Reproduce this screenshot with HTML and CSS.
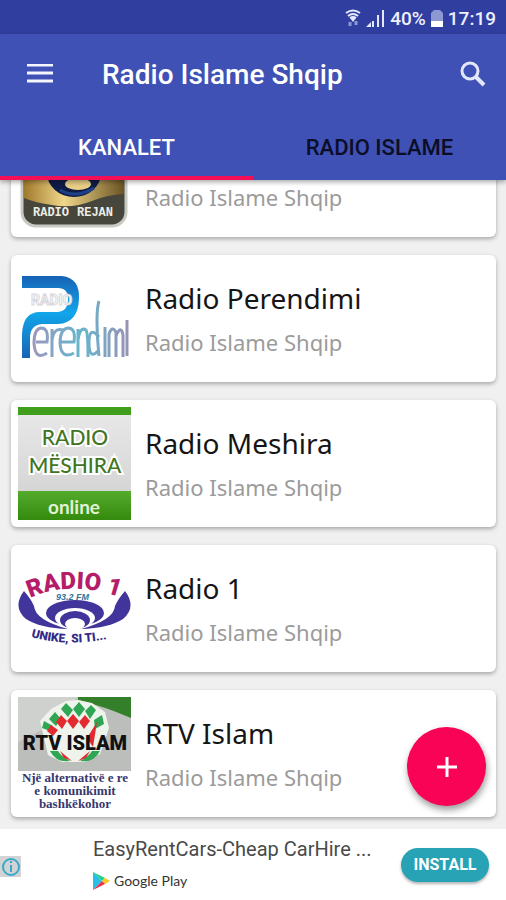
FILE: index.html
```html
<!DOCTYPE html>
<html lang="sq">
<head>
  <meta charset="UTF-8" />
  <meta name="viewport" content="width=device-width, initial-scale=1.0" />
  <title>Radio Islame Shqip</title>
  <link rel="stylesheet" href="styles.css">
</head>
<body>

  <div class="status-bar">
    <svg class="wifi-icon" viewBox="0 0 16 18" width="16" height="18">
      <g fill="none" stroke="#e4e8ff" stroke-width="2">
        <path d="M1 4Q8-1 15 4" />
        <path d="M3 7Q8 3 13 7" />
        <path d="M5 9Q8 7 11 9" />
      </g>
      <path d="M5 9h6l-3 4z" fill="#e4e8ff" />
      <path d="M5 17v-4M11 12v4" stroke="#8b96d4" stroke-width="3" />
    </svg>
    <svg class="signal-icon" viewBox="0 0 19 18" width="19" height="18">
      <path d="M0 18l5-5v5zM6 12h2v6h-2zM11 6h2v12h-2zM16 1h2v17h-2z" fill="#e4e8ff" />
    </svg>
    <span>40%</span>
    <svg class="battery-icon" viewBox="0 0 12 19" width="12" height="19">
      <path d="M3 1h6l3 3v8H0V4z" fill="#8d97d2" />
      <path d="M0 12h12v6H0z" fill="#fff" />
    </svg>
    <span class="clock">17:19</span>
  </div>

  <header>
    <div class="toolbar">
      <button class="icon-btn" aria-label="Menu">
        <svg viewBox="0 0 28 20" width="28" height="20">
          <path d="M1 1h26M1 9h26M1 17h26" stroke="#f3f5ff" stroke-width="3" />
        </svg>
      </button>
      <h1>Radio Islame Shqip</h1>
      <button class="icon-btn" aria-label="Search">
        <svg viewBox="0 0 26 26" width="26" height="26" fill="none" stroke="#e3e7fb" stroke-width="3">
          <circle cx="10" cy="10" r="8" />
          <path d="M15 15l9 9" stroke-width="4" />
        </svg>
      </button>
    </div>
    <nav class="tabs">
      <a class="tab active" href="#kanalet">KANALET</a>
      <a class="tab" href="#radio">RADIO ISLAME</a>
    </nav>
  </header>

  <main class="channel-list" id="kanalet">
    <article class="card" aria-label="Radio Rejan">
      <svg class="thumb" viewBox="0 0 113 113">
        <defs>
          <linearGradient id="gold" x1="0" x2="1">
            <stop offset="0" stop-color="#a07a2c" />
            <stop offset="0.4" stop-color="#f0d78a" />
            <stop offset="1" stop-color="#6b5424" />
          </linearGradient>
        </defs>
        <rect x="4" y="2" width="104" height="107" rx="14" fill="#46463c" stroke="#c9c9c4" stroke-width="3" />
        <path d="M6 50H106V77Q88 78 74 84Q54 92 34 88Q18 86 6 81Z" fill="url(#gold)" />
        <ellipse cx="56" cy="56" rx="27" ry="24" fill="#101c48" />
        <ellipse cx="60" cy="67" rx="13" ry="6" fill="#e7cf86" />
        <path d="M42 73Q58 82 76 71" fill="none" stroke="#1d4187" stroke-width="3" />
        <text x="15" y="99" class="logo-rejan">RADIO</text>
        <text x="59" y="99" class="logo-rejan">REJAN</text>
      </svg>
      <div class="info info-end">
        <p>Radio Islame Shqip</p>
      </div>
    </article>

    <article class="card">
      <svg class="thumb" viewBox="0 0 113 113">
        <defs>
          <linearGradient id="blue" x1="0" y1="0" x2="0" y2="1">
            <stop offset="0" stop-color="#1762b5" />
            <stop offset="0.45" stop-color="#12a6ea" />
            <stop offset="1" stop-color="#1763b4" />
          </linearGradient>
          <linearGradient id="script" gradientUnits="userSpaceOnUse" x1="14" x2="110" y1="0" y2="0">
            <stop offset="0" stop-color="#9d97bd" />
            <stop offset="0.5" stop-color="#66b5cd" />
            <stop offset="1" stop-color="#9694b5" />
          </linearGradient>
        </defs>
        <path d="M4 14H44Q62 16 61 37Q60 61 40 62H24Q12 63 12 76V96H4V72Q5 50 22 50H40Q50 49 50 37Q50 26 40 26H4Z" fill="url(#blue)" />
        <text x="13" y="43" class="logo-faint">RADIO</text>
        <g fill="none" stroke="url(#script)" stroke-width="3">
          <path d="M18 80H29Q31 66 23 66Q16 67 16 81Q17 99 29 91M34 95V67M34 78Q36 65 45 68" />
          <path d="M43 80H56Q58 66 50 66Q42 67 42 81Q43 98 56 91M60 95V67M60 78Q62 64 68 68Q70 71 70 95" />
          <path d="M81 39Q77 52 81 94M81 75Q71 63 71 81Q71 99 81 88M87 95V65M91 95V72Q94 63 98 70V95M98 74Q103 62 105 73V95M109 58V94" />
        </g>
      </svg>
      <div class="info">
        <h2>Radio Perendimi</h2>
        <p>Radio Islame Shqip</p>
      </div>
    </article>

    <article class="card">
      <svg class="thumb" viewBox="0 0 113 113">
        <defs>
          <linearGradient id="grey" x1="0" y1="0" x2="0" y2="1">
            <stop offset="0" stop-color="#e9e9e9" />
            <stop offset="1" stop-color="#cfcfcf" />
          </linearGradient>
          <linearGradient id="green" x1="0" y1="0" x2="0" y2="1">
            <stop offset="0" stop-color="#55ab2c" />
            <stop offset="1" stop-color="#338a0d" />
          </linearGradient>
        </defs>
        <rect width="113" height="113" fill="url(#grey)" />
        <rect width="113" height="8" fill="#419d1c" />
        <rect y="84" width="113" height="29" fill="url(#green)" />
        <text x="57" y="38" class="logo-meshira">RADIO</text>
        <text x="57" y="66" class="logo-meshira">MËSHIRA</text>
        <text x="56" y="107" class="logo-online">online</text>
      </svg>
      <div class="info">
        <h2>Radio Meshira</h2>
        <p>Radio Islame Shqip</p>
      </div>
    </article>

    <article class="card">
      <svg class="thumb" viewBox="0 0 113 113">
        <defs>
          <path id="arc-name" d="M12 46Q56 26 112 49" />
          <path id="arc-motto" d="M13 85Q56 97 106 83" />
        </defs>
        <g fill="#41349a">
          <path d="M6 39Q-6 55 8 67Q22 76 50 77Q17 68 16 54Q13 47 6 39Z" />
          <path d="M107 39Q119 55 105 67Q91 76 63 77Q96 68 97 54Q100 47 107 39Z" />
        </g>
        <ellipse cx="57" cy="61" rx="29" ry="13" fill="#41349a" />
        <ellipse cx="57" cy="66" rx="20" ry="10" fill="#fff" />
        <ellipse cx="57" cy="68" rx="15" ry="9" fill="#41349a" />
        <ellipse cx="57" cy="72" rx="10" ry="6" fill="#fff" />
        <text class="logo-radio1"><textPath href="#arc-name">RADIO 1</textPath></text>
        <text x="38" y="48" class="logo-freq">93.2 FM</text>
        <text class="logo-motto"><textPath href="#arc-motto">UNIKE, SI TI...</textPath></text>
      </svg>
      <div class="info">
        <h2>Radio 1</h2>
        <p>Radio Islame Shqip</p>
      </div>
    </article>

    <article class="card">
      <svg class="thumb" viewBox="0 0 113 113">
        <rect width="113" height="74" fill="#bcbebc" />
        <path d="M0 0H60L30 30L0 45Z" fill="#cfd1cf" />
        <path d="M60 0H113V21Q85 9 60 3Z" fill="#34802a" />
        <path d="M22 24L33 12L48 4L60 3L74 6L87 15L91 31L82 57L66 65H44L30 58Z" fill="#eef3ec" />
        <g fill="#2fa653">
          <path d="M48 6l7 7-5 7-7-8zM61 5l6 7-6 8-6-8zM73 8l5 5-6 9-5-8zM37 15l6 7-5 7-7-7zM84 18l2 9-9 5-1-9zM26 24l9 5-3 5-8-3z" />
          <path d="M32 54Q38 66 52 64Q43 59 40 54ZM82 54Q76 66 62 64Q71 59 74 54Z" />
        </g>
        <g fill="#e32b2f">
          <path d="M43 18l6 6-5 8-6-7zM55 17l6 7-6 8-6-8zM67 18l5 6-6 8-5-7zM33 28l7 5-5 6-6-5zM79 25l-4 25-6-9z" />
          <path d="M42 54l12 10-8-3zM72 54l-12 10 8-3z" />
        </g>
        <text x="57" y="53" class="logo-rtv">RTV ISLAM</text>
        <g class="logo-tagline">
          <text x="57" y="85">Një alternativë e re</text>
          <text x="57" y="98">e komunikimit</text>
          <text x="57" y="111">bashkëkohor</text>
        </g>
      </svg>
      <div class="info">
        <h2>RTV Islam</h2>
        <p>Radio Islame Shqip</p>
      </div>
    </article>

    <button class="fab" aria-label="Add">
      <svg viewBox="0 0 22 22" width="22" height="22">
        <path d="M11 1v20M1 11h20" stroke="#fff" stroke-width="3" />
      </svg>
    </button>
  </main>

  <footer class="ad">
    <a class="ad-info" href="#ad" aria-label="Ad info">
      <svg viewBox="0 0 21 21" width="21" height="21">
        <rect width="21" height="21" fill="#d3d3d5" />
        <circle cx="11" cy="11" r="8" fill="none" stroke="#35abc9" stroke-width="2" />
        <path d="M11 9v7M11 5v2" stroke="#35abc9" stroke-width="2" />
      </svg>
    </a>
    <div class="ad-text">
      <p>EasyRentCars-Cheap CarHire ...</p>
      <div class="store">
        <svg viewBox="0 0 17 20" width="17" height="20">
          <path d="M0 1v18l9-9z" fill="#26c0e8" />
          <path d="M0 1l12 6-3 3z" fill="#1fd08a" />
          <path d="M12 7l5 3-5 3-3-3z" fill="#fbc91d" />
          <path d="M0 19l12-6-3-3z" fill="#e8334d" />
        </svg>
        <span>Google Play</span>
      </div>
    </div>
    <button class="install-btn">INSTALL</button>
  </footer>

</body>
</html>
```

FILE: styles.css
```css
* {
  box-sizing: border-box;
}

body {
  font-family: 'Noto Sans', sans-serif;
  background-color: #f0f0f0;
  margin: 0;
  height: 100vh;
  display: flex;
  flex-direction: column;
}

h1, h2, p {
  margin: 0;
  font-weight: 400;
}

button {
  border: none;
  padding: 0;
  cursor: pointer;
}

svg {
  display: block;
}

.status-bar {
  background-color: #303f9f;
  color: #eef0ff;
  height: 34px;
  flex: none;
  display: flex;
  align-items: center;
  justify-content: flex-end;
  gap: 5px;
  padding: 2px 10px 0 0;
  font-family: Roboto, sans-serif;
  font-weight: 500;
  font-size: 19px;
}

header {
  background-color: #3f51b5;
  flex: none;
  box-shadow: 0 2px 5px rgba(0,0,0,0.35);
  z-index: 10;
}

.toolbar {
  height: 80px;
  display: flex;
  align-items: center;
  padding: 0 20px 0 26px;
}

.toolbar h1 {
  flex: 1;
  padding-left: 48px;
  color: #fff;
  font-family: Roboto, sans-serif;
  font-weight: 500;
  font-size: 28px;
}

.icon-btn {
  background: none;
}

.tabs {
  display: flex;
}

.tab {
  flex: 1;
  height: 66px;
  border-bottom: 4px solid transparent;
  color: #0b0e26;
  font-family: Roboto, sans-serif;
  font-weight: 500;
  font-size: 22px;
  line-height: 68px;
  text-align: center;
  text-decoration: none;
}

.tab.active {
  color: #fff;
  border-bottom-color: #f50f57;
}

.channel-list {
  position: relative;
  flex: 1;
  min-height: 0;
  overflow: hidden;
  display: flex;
  flex-direction: column;
  justify-content: flex-end;
  gap: 18px;
  padding: 0 10px 12px 11px;
}

.card {
  flex: none;
  display: flex;
  align-items: center;
  gap: 14px;
  padding: 7px;
  background-color: #fff;
  border-radius: 6px;
  box-shadow: 0 2px 4px rgba(0,0,0,0.3);
}

.thumb {
  width: 113px;
  height: 113px;
  flex: none;
}

.info {
  padding-top: 2px;
}

.info-end {
  align-self: flex-end;
  padding-bottom: 11px;
}

.info h2 {
  color: #151515;
  font-size: 28px;
  line-height: 44px;
}

.info p {
  color: #9b9b9b;
  font-size: 22px;
  line-height: 44px;
}

.logo-rejan {
  font: 700 12px 'Liberation Mono', monospace;
  fill: #efeee4;
}

.logo-faint {
  font: 700 14px Roboto, sans-serif;
  fill: #fff;
  stroke: #d8d8dc;
}

.logo-meshira {
  font: 500 21px Lato, sans-serif;
  fill: #41751f;
  stroke: #fff;
  stroke-width: 4px;
  paint-order: stroke;
  text-anchor: middle;
}

.logo-online {
  font: 700 19px Lato, sans-serif;
  fill: #e2f2d6;
  text-anchor: middle;
}

.logo-radio1 {
  font: 900 24px Roboto, sans-serif;
  fill: #b51d69;
}

.logo-freq {
  font: italic 700 9px 'Liberation Sans', sans-serif;
  fill: #36739b;
}

.logo-motto {
  font: 900 12px Roboto, sans-serif;
  fill: #342b87;
}

.logo-rtv {
  font: 900 20px Roboto, sans-serif;
  fill: #111;
  text-anchor: middle;
}

.logo-tagline {
  font: 700 13px 'Liberation Serif', serif;
  fill: #37376d;
  text-anchor: middle;
}

.fab {
  position: absolute;
  right: 20px;
  bottom: 23px;
  width: 79px;
  height: 79px;
  border-radius: 50%;
  background-color: #f90357;
  box-shadow: 1px 4px 7px rgba(0,0,0,0.4);
  display: flex;
  align-items: center;
  justify-content: center;
}

.ad {
  flex: none;
  height: 71px;
  background-color: #fff;
  display: flex;
  align-items: center;
  padding-right: 17px;
}

.ad-info {
  padding-top: 4px;
}

.ad-text {
  flex: 1;
  padding-left: 72px;
}

.ad-text p {
  color: #4a4a4a;
  font-family: Roboto, sans-serif;
  font-size: 20px;
  line-height: 32px;
}

.store {
  display: flex;
  align-items: center;
  gap: 4px;
  height: 32px;
  color: #333;
  font-family: Lato, sans-serif;
  font-size: 14px;
}

.install-btn {
  width: 88px;
  height: 34px;
  border-radius: 17px;
  background-color: #28a3b5;
  box-shadow: 0 2px 3px rgba(0,0,0,0.3);
  color: #fff;
  font-family: Roboto, sans-serif;
  font-weight: 700;
  font-size: 16px;
}
```
